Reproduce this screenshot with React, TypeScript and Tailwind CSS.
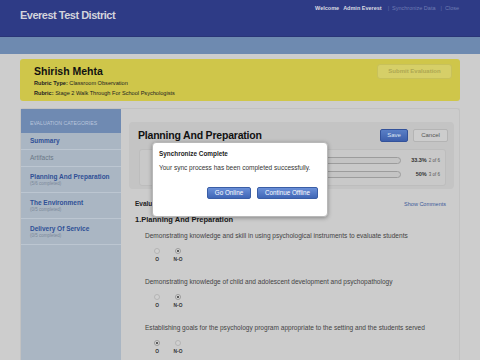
import React from "react";

const items = [
  {
    text: "Demonstrating knowledge and skill in using psychological instruments to evaluate students",
    value: "N-O",
  },
  {
    text: "Demonstrating knowledge of child and adolescent development and psychopathology",
    value: "N-O",
  },
  {
    text: "Establishing goals for the psychology program appropriate to the setting and the students served",
    value: "O",
  },
];

function Radio({ checked }: { checked: boolean }) {
  return (
    <span
      className={
        "flex h-[6px] w-[6px] items-center justify-center rounded-full border " +
        (checked ? "border-[#9a9a9a] bg-[#d6d6d6]" : "border-[#b4b4b4] bg-[#d0d0d0]")
      }
    >
      {checked && <span className="h-[2px] w-[2px] rounded-full bg-[#333]" />}
    </span>
  );
}

function Header() {
  return (
    <>
      <div className="flex h-[37px] justify-between border-b border-[#2a3577] bg-[#2e3b86] pl-[20px] pr-[21px]">
        <div className="pt-[8px] text-[11px] font-bold leading-[14px] tracking-[-0.5px] text-[#d3d4dc]">
          Everest Test District
        </div>
        <div className="flex gap-[3px] pt-[5px] text-[5.5px] leading-[6px]">
          <span className="font-bold text-[#dcdce2]">Welcome</span>
          <span className="ml-[1px] font-bold text-[#dcdce2]">Admin Everest</span>
          <span className="ml-[3px] text-[#5f6ca8]">|</span>
          <span className="text-[#6e7bb3]">Synchronize Data</span>
          <span className="ml-[2px] text-[#5f6ca8]">|</span>
          <span className="text-[#6e7bb3]">Close</span>
        </div>
      </div>
      <div className="h-[17px] bg-[#6e8ab0]" />
    </>
  );
}

function Sidebar() {
  const cats = [
    { name: "Summary", sub: "", active: true },
    { name: "Artifacts", sub: "", active: false },
    { name: "Planning And Preparation", sub: "(5/6 completed)", active: true },
    { name: "The Environment", sub: "(0/5 completed)", active: true },
    { name: "Delivery Of Service", sub: "(0/5 completed)", active: true },
  ];
  return (
    <div className="w-[100px] shrink-0 bg-[#aab6c3]">
      <div className="h-[24px] bg-[#6f8ab2] pl-[9px] pt-[11px] text-[5.2px] leading-[6px] text-[#b9c5dc]">
        EVALUATION CATEGORIES
      </div>
      {cats.map((c) => (
        <div
          key={c.name}
          className={
            "flex flex-col justify-center border-b border-[#bcc6d1] pl-[9px] " +
            (c.sub ? "h-[26px]" : "h-[17px]")
          }
        >
          <div
            className={
              "text-[6.5px] font-bold leading-[8px] " +
              (c.active ? "text-[#2f5096]" : "text-[#6b7887] font-normal")
            }
          >
            {c.name}
          </div>
          {c.sub && <div className="text-[4.5px] leading-[6px] text-[#7b8899]">{c.sub}</div>}
        </div>
      ))}
    </div>
  );
}

function ProgressRow({ pct, label, count }: { pct: number; label: string; count: string }) {
  return (
    <div className="flex h-[10px] items-center pl-[21px] pr-[5px]">
      <div className="h-[7px] flex-1 overflow-hidden rounded-full border border-[#9c9c9c] bg-[#c4c4c4]">
        <div className="h-full bg-[#8fa5c8]" style={{ width: `${pct}%` }} />
      </div>
      <div className="flex w-[39px] items-baseline justify-end gap-[2px]">
        <span className="text-[5.5px] font-bold text-[#333]">{label}</span>
        <span className="text-[4.5px] text-[#555]">{count}</span>
      </div>
    </div>
  );
}

function Content() {
  return (
    <div className="flex-1 pl-[8px] pr-[5px] pt-[13px]">
      <div className="h-[67px] rounded-[4px] bg-[#c4c4c4]">
        <div className="flex h-[20px] items-end justify-between pl-[9px] pr-[6px]">
          <div className="text-[10.5px] font-bold leading-[13px] tracking-[-0.2px] text-[#111]">
            Planning And Preparation
          </div>
          <div className="flex gap-[5px]">
            <div className="flex h-[13px] w-[28px] items-center justify-center rounded-[2px] border border-[#33529a] bg-gradient-to-b from-[#5a7fc6] to-[#3d5fab] text-[6px] text-[#dfe6f3]">
              Save
            </div>
            <div className="flex h-[13px] w-[35px] items-center justify-center rounded-[2px] border border-[#b4b4b4] bg-[#cdcdcd] text-[6px] text-[#555]">
              Cancel
            </div>
          </div>
        </div>
        <div className="mx-[8px] ml-[10px] mt-[7px] flex h-[37px] flex-col gap-[4px] rounded-[3px] border border-[#bdbdbd] bg-[#c9c9c9] pt-[5px]">
          <ProgressRow pct={33.3} label="33.3%" count="2 of 6" />
          <ProgressRow pct={50} label="50%" count="3 of 6" />
        </div>
      </div>

      <div className="mt-[11px] flex justify-between pl-[6px] pr-[8px] text-[6.5px] leading-[8px]">
        <span className="font-bold text-[#222]">Evaluation Notes</span>
        <span className="text-[5.5px] text-[#3c5a99]">Show Comments</span>
      </div>
      <div className="mt-[7px] pl-[6px] text-[7.5px] font-bold leading-[10px] text-[#1a1a1a]">
        1.Planning And Preparation
      </div>

      <div className="mt-[7px] flex flex-col gap-[15px] pl-[16px]">
        {items.map((it) => (
          <div key={it.text}>
            <div className="text-[6.55px] leading-[8px] text-[#444]">{it.text}</div>
            <div className="mt-[8px] flex gap-[7px] pl-[5px]">
              {["O", "N-O"].map((o) => (
                <div key={o} className="flex w-[14px] flex-col items-center">
                  <Radio checked={it.value === o} />
                  <span className="mt-[3px] text-[4.8px] font-bold leading-[6px] text-[#333]">{o}</span>
                </div>
              ))}
            </div>
          </div>
        ))}
      </div>
    </div>
  );
}

function SyncDialog() {
  return (
    <div className="absolute left-[152px] top-[142px] h-[75px] w-[176px] rounded-[4px] border border-[#b8b8b8] bg-white pl-[6px] pr-[9px] pt-[7px] shadow-[0_1px_4px_rgba(0,0,0,0.35)]">
      <div className="text-[6.4px] font-bold leading-[8px] text-[#222]">Synchronize Complete</div>
      <div className="mt-[5px] text-[6.5px] leading-[9px] text-[#333]">
        Your sync process has been completed successfully.
      </div>
      <div className="mt-[15px] flex justify-end gap-[6px]">
        <div className="flex h-[12px] w-[44px] items-center justify-center rounded-[2px] border border-[#3a5ea6] bg-gradient-to-b from-[#6b90d8] to-[#3f66b6] text-[6.3px] text-white">
          Go Online
        </div>
        <div className="flex h-[12px] w-[61px] items-center justify-center rounded-[2px] border border-[#3a5ea6] bg-gradient-to-b from-[#6b90d8] to-[#3f66b6] text-[6.3px] text-white">
          Continue Offline
        </div>
      </div>
    </div>
  );
}

export default function App() {
  return (
    <div className="relative h-[360px] w-[480px] overflow-hidden bg-[#cdcdcd] font-['Liberation_Sans',Arial,sans-serif]">
      <Header />
      <div className="mx-[20px] mt-[5px] flex h-[42px] justify-between rounded-[3px] bg-[#cfc64a] pl-[14px] pr-[8px]">
        <div className="pt-[6px]">
          <div className="text-[10.5px] font-bold leading-[12px] text-[#111]">Shirish Mehta</div>
          <div className="mt-[1px] text-[5.6px] leading-[10px] text-[#222]">
            <div>
              <span className="font-bold">Rubric Type:</span> Classroom Observation
            </div>
            <div>
              <span className="font-bold">Rubric:</span> Stage 2 Walk Through For School Psychologists
            </div>
          </div>
        </div>
        <div className="pt-[5px]">
          <div className="flex h-[15px] w-[75px] items-center justify-center rounded-[3px] border border-[#c8c15a] bg-[#d6cf68] text-[6px] font-bold text-[#aea853]">
            Submit Evaluation
          </div>
        </div>
      </div>
      <div className="mx-[20px] mt-[7px] flex h-[260px] rounded-t-[3px] border border-b-0 border-[#c2c2c2] bg-[#cccccc]">
        <Sidebar />
        <Content />
      </div>
      <SyncDialog />
    </div>
  );
}
